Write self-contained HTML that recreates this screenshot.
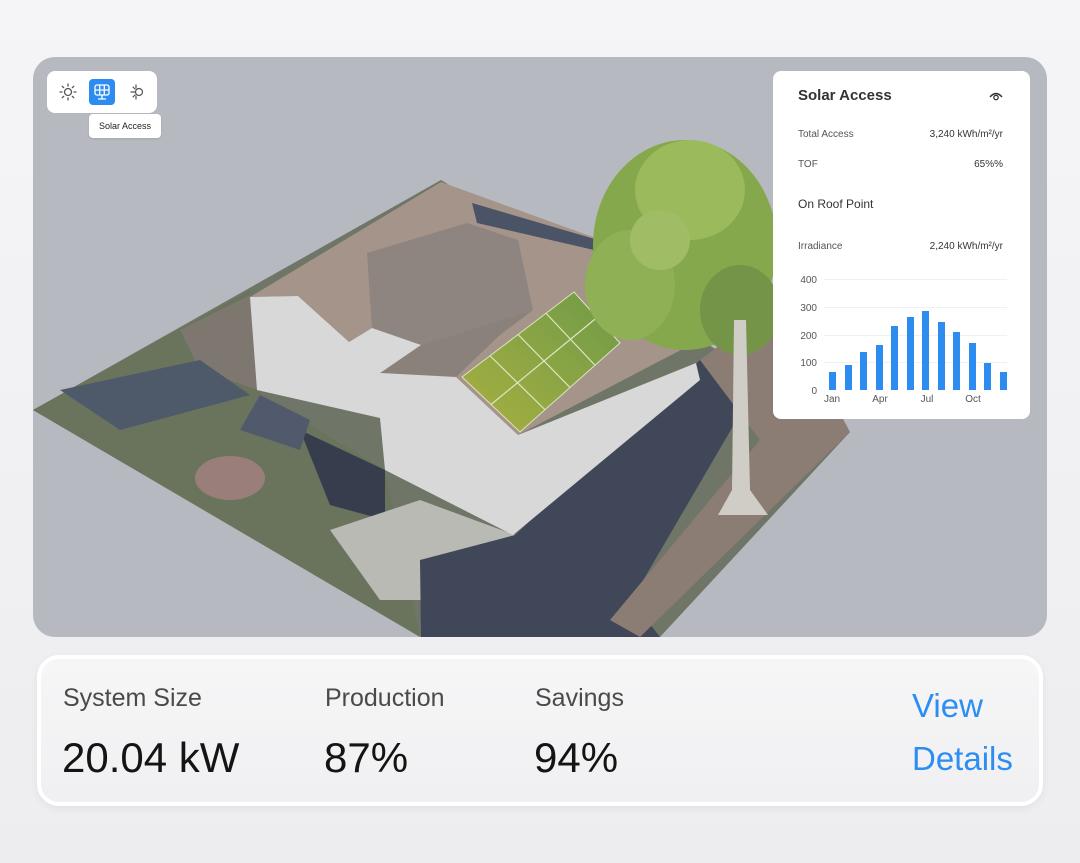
<!DOCTYPE html>
<html><head><meta charset="utf-8"><style>
*{margin:0;padding:0;box-sizing:border-box}
body{width:1080px;height:863px;background:linear-gradient(#f5f5f7,#ededf0);font-family:"Liberation Sans",sans-serif;position:relative;overflow:hidden}
.scene{position:absolute;left:33px;top:57px;width:1014px;height:580px;border-radius:22px;background:#b6bac0;overflow:hidden}
.tb{position:absolute;left:47px;top:71px;width:110px;height:42px;background:#fff;border-radius:8px}
.tip{position:absolute;left:89px;top:114px;width:72px;height:24px;background:#fff;border-radius:4px;font-size:9px;color:#222;line-height:24px;text-align:center;box-shadow:0 1px 2px rgba(0,0,0,.1)}
.card{position:absolute;left:773px;top:71px;width:257px;height:348px;background:#fff;border-radius:8px}
.t{position:absolute;font-size:10px;color:#444;white-space:nowrap}
.bottom{position:absolute;left:37px;top:655px;width:1006px;height:151px;border-radius:22px;background:linear-gradient(#f6f6f7,#f0f0f2);border:4px solid #fff;box-shadow:0 2px 8px rgba(0,0,0,.06)}
.lbl{position:absolute;font-size:25px;color:#4a4a4a;top:684px}
.val{position:absolute;font-size:42px;color:#141414;top:734px}
.blue{position:absolute;font-size:33px;color:#2b8ef0;left:912px}
</style></head><body>
<div class="scene">
<svg width="1014" height="580" viewBox="33 57 1014 580" style="position:absolute;left:0;top:0">
<defs><linearGradient id="pg" x1="0" y1="1" x2="1" y2="0"><stop offset="0" stop-color="#a8b040"/><stop offset="1" stop-color="#6f9a48"/></linearGradient></defs>
<polygon points="33,410 441,180 850,432 660,637 421,637" fill="#6f7668"/>
<polygon points="33,410 250,290 260,395 385,470 420,637" fill="#6a735c"/>
<polygon points="180,330 250,295 258,390 200,370" fill="#7d7770"/>
<polygon points="60,390 200,360 250,395 120,430" fill="#4e5a6a"/>
<polygon points="300,430 385,470 385,520 330,505" fill="#363e4e"/>
<polygon points="330,530 420,500 515,535 470,600 380,600" fill="#b9bab4"/>
<polygon points="420,560 515,535 600,560 660,637 421,637" fill="#404758"/>
<polygon points="515,535 700,360 760,380 610,637 560,600" fill="#3f4759"/>
<polygon points="700,360 780,300 850,432 640,637 610,620 760,440" fill="#8c7d74"/>
<polygon points="260,395 310,420 300,450 240,430" fill="#505a6c"/>
<ellipse cx="230" cy="478" rx="35" ry="22" fill="#9a7e7a"/>
<polygon points="250,297 441,182 615,245 700,340 518,435 456,377 380,373 421,345 372,328 349,342 298,296" fill="#a59489"/>
<polygon points="367,253 467,223 518,240 533,310 421,345 372,328" fill="#8e8580"/>
<polygon points="380,373 421,345 533,310 500,335 456,377" fill="#8a817b"/>
<polygon points="472,203 615,245 594,250 477,223" fill="#4b5366"/>
<polygon points="250,297 298,296 349,342 372,328 421,345 380,373 456,377 518,435 696,363 700,380 513,535 385,470 380,418 257,390" fill="#d8d8d8"/>
<polygon points="462,377 574,292 620,343 520,432" fill="url(#pg)" stroke="#dde4c0" stroke-width="1"/>
<g stroke="#dfe6c4" stroke-width="1.2"><line x1="491" y1="404.5" x2="597" y2="317.5"/><line x1="490" y1="355.75" x2="545" y2="409.75"/><line x1="518" y1="334.5" x2="570" y2="387.5"/><line x1="546" y1="313.25" x2="595" y2="365.25"/></g>
<g fill="#86a84c"><ellipse cx="685" cy="245" rx="92" ry="105"/><ellipse cx="630" cy="285" rx="45" ry="55" fill="#8fb054"/><ellipse cx="690" cy="190" rx="55" ry="50" fill="#9aba5c"/><ellipse cx="740" cy="310" rx="40" ry="45" fill="#749448"/><ellipse cx="660" cy="240" rx="30" ry="30" fill="#a0bd66"/></g>
<polygon points="734,320 746,320 750,490 768,515 718,515 732,490" fill="#d0cdc6"/>
</svg>
</div>
<div class="tb">
<svg width="110" height="42" style="position:absolute;left:0;top:0">
<g stroke="#555" stroke-width="1.3" fill="none" stroke-linecap="round"><circle cx="21" cy="21" r="3.5"/><path d="M21 13v2M21 27v2M13 21h2M27 21h2M15.3 15.3l1.4 1.4M25.3 25.3l1.4 1.4M15.3 26.7l1.4-1.4M25.3 16.7l1.4-1.4"/></g>
<rect x="42" y="8" width="26" height="26" rx="4" fill="#2d8cf0"/>
<g stroke="#fff" stroke-width="1.3" fill="none"><rect x="48" y="14" width="14" height="10" rx="2"/><path d="M52.7 14v10M57.3 14v10M48 19h14M55 24v4M51 28h8"/></g>
<g stroke="#555" stroke-width="1.2" fill="none" stroke-linecap="round"><circle cx="92" cy="21" r="3.5"/><path d="M88 21h-4M86 16l2 2M86 26l2-2M89 14v3M89 28v-3"/></g>
</svg>
</div>
<div class="tip">Solar Access</div>
<div class="card">
<div class="t" style="left:25px;top:16px;font-size:15px;font-weight:bold;color:#333">Solar Access</div>
<svg width="16" height="12" style="position:absolute;left:215px;top:19px"><path d="M2 7Q8 0 14 7" stroke="#333" stroke-width="1.4" fill="none"/><circle cx="8" cy="7.5" r="2.2" stroke="#333" stroke-width="1.3" fill="none"/></svg>
<div class="t" style="left:25px;top:58px;color:#555">Total Access</div>
<div class="t" style="right:27px;top:58px;color:#333">3,240 kWh/m²/yr</div>
<div class="t" style="left:25px;top:88px;color:#555">TOF</div>
<div class="t" style="right:27px;top:88px;color:#333">65%%</div>
<div class="t" style="left:25px;top:126px;font-size:12px;color:#333">On Roof Point</div>
<div class="t" style="left:25px;top:170px;color:#555">Irradiance</div>
<div class="t" style="right:27px;top:170px;color:#333">2,240 kWh/m²/yr</div>
</div>
<svg width="1080" height="863" style="position:absolute;left:0;top:0">
<g stroke="#eef0f2" stroke-width="1"><line x1="824" y1="279.5" x2="1007" y2="279.5"/><line x1="824" y1="307.5" x2="1007" y2="307.5"/><line x1="824" y1="335.5" x2="1007" y2="335.5"/><line x1="824" y1="362.5" x2="1007" y2="362.5"/></g>
<g font-family="Liberation Sans" font-size="10" fill="#555" text-anchor="end"><text x="817" y="283">400</text><text x="817" y="311">300</text><text x="817" y="339">200</text><text x="817" y="366">100</text><text x="817" y="394">0</text></g>
<g font-family="Liberation Sans" font-size="10" fill="#555" text-anchor="middle"><text x="832" y="402">Jan</text><text x="880" y="402">Apr</text><text x="927" y="402">Jul</text><text x="973" y="402">Oct</text></g>
<g fill="#2d8cf0">
<rect x="829" y="372" width="7" height="18"/><rect x="845" y="365" width="7" height="25"/><rect x="860" y="352" width="7" height="38"/><rect x="876" y="345" width="7" height="45"/><rect x="891" y="326" width="7" height="64"/><rect x="907" y="317" width="7" height="73"/><rect x="922" y="311" width="7" height="79"/><rect x="938" y="322" width="7" height="68"/><rect x="953" y="332" width="7" height="58"/><rect x="969" y="343" width="7" height="47"/><rect x="984" y="363" width="7" height="27"/><rect x="1000" y="372" width="7" height="18"/>
</g>
</svg>
<div class="bottom"></div>
<div class="lbl" style="left:63px">System Size</div>
<div class="lbl" style="left:325px">Production</div>
<div class="lbl" style="left:535px">Savings</div>
<div class="val" style="left:62px">20.04 kW</div>
<div class="val" style="left:324px">87%</div>
<div class="val" style="left:534px">94%</div>
<div class="blue" style="top:687px">View</div>
<div class="blue" style="top:740px">Details</div>
</body></html>
